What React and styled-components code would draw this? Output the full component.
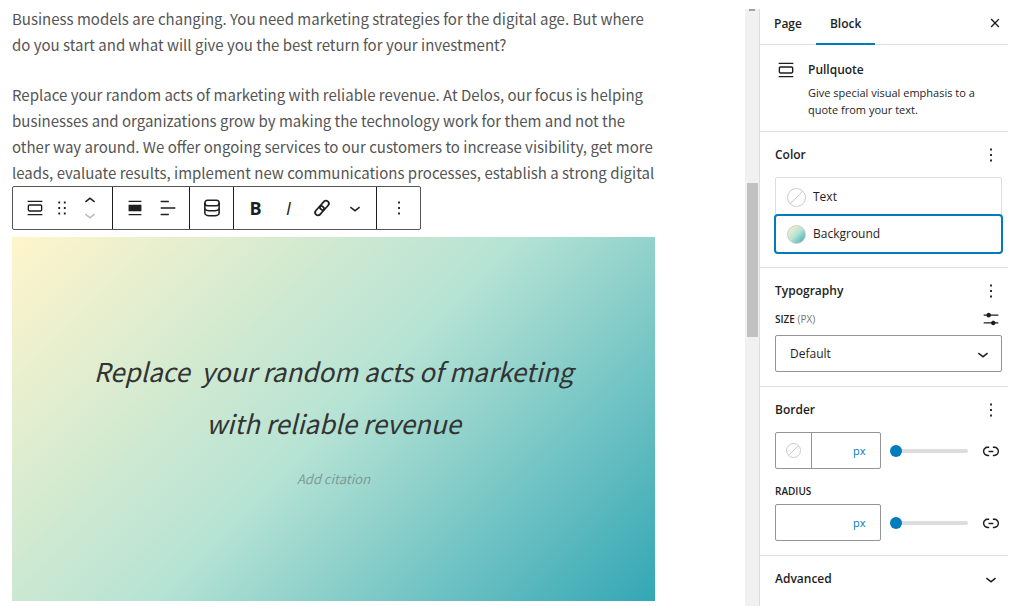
import React from 'react';
import styled, { createGlobalStyle } from 'styled-components';

const GlobalStyle = createGlobalStyle`
  * {
    box-sizing: border-box;
  }
  body {
    margin: 0;
    background: #fff;
    overflow: hidden;
  }
`;

const bodyFont = '"Noto Sans CJK SC", "Open Sans", sans-serif';
const uiFont = '"Open Sans", "Noto Sans", sans-serif';
const gradient = 'linear-gradient(135deg, rgb(255, 245, 203) 0%, rgb(182, 227, 212) 50%, rgb(51, 167, 181) 100%)';

const Page = styled.div`
  display: flex;
  height: 100vh;
  padding-right: 16px;
  overflow: hidden;
`;

const Editor = styled.main`
  flex: 1;
  min-width: 0;
  padding: 6px 90px 0 12px;
  font-family: ${bodyFont};
`;

const Paragraph = styled.p`
  margin: 0 0 24px;
  font-size: 15px;
  line-height: 26px;
  color: #555;
  white-space: nowrap;
  &:nth-of-type(2) {
    margin-bottom: 0;
  }
`;

const Toolbar = styled.div`
  display: inline-flex;
  height: 44px;
  border: 1px solid #555;
  border-radius: 2px;
  background: #fff;
  vertical-align: top;
`;

const ToolbarGroup = styled.div`
  display: flex;
  align-items: center;
  padding: 0 5px;
  & + & {
    border-left: 1px solid #1e1e1e;
  }
`;

const ToolButton = styled.button`
  display: flex;
  align-items: center;
  justify-content: center;
  width: ${(props) => props.$width || 33}px;
  height: 32px;
  padding: 0;
  border: 0;
  background: none;
  color: #1e1e1e;
`;

const Letter = styled.span`
  font: ${(props) => (props.$italic ? 'italic 400' : '700')} 18px ${uiFont};
`;

const Movers = styled.div`
  display: flex;
  flex-direction: column;
  width: 34px;
`;

const Mover = styled.button`
  display: flex;
  justify-content: center;
  align-items: center;
  height: 14px;
  padding: 0;
  border: 0;
  overflow: hidden;
  background: none;
  color: #1e1e1e;
  &:disabled {
    color: #bbb;
  }
`;

const Pullquote = styled.figure`
  margin: 7px 0 0;
  padding: 108px 64px 110px;
  text-align: center;
  background: ${gradient};
`;

const Quote = styled.blockquote`
  margin: 0 0 18px;
  font-size: 26px;
  font-style: italic;
  line-height: 52px;
  color: #333;
  white-space: pre-wrap;
`;

const Citation = styled.figcaption`
  font-size: 13px;
  font-style: italic;
  line-height: 24px;
  color: #7d9c96;
`;

const ScrollTrack = styled.div`
  width: 14px;
  margin-top: 9px;
  padding: 0 1px 0 2px;
  background: #f1f1f1;
`;

const ScrollUp = styled.div`
  width: 6px;
  height: 2px;
  margin: 0 2px 172px;
  background: #a3a3a3;
`;

const ScrollThumb = styled.div`
  height: 154px;
  background: #c1c1c1;
`;

const Sidebar = styled.aside`
  width: 249px;
  margin-top: 9px;
  border-left: 1px solid #ddd;
  font-family: ${uiFont};
  font-size: 12px;
  color: #1e1e1e;
`;

const Tabs = styled.div`
  display: flex;
  height: 36px;
  border-bottom: 1px solid #e0e0e0;
`;

const Tab = styled.button`
  height: 36px;
  padding: 0 14px 4px;
  border: 0;
  border-bottom: 2px solid ${(props) => (props.$active ? '#007cba' : 'transparent')};
  background: none;
  font: 600 12px/16px ${uiFont};
  color: #1e1e1e;
`;

const IconButton = styled.button`
  display: flex;
  align-items: center;
  justify-content: center;
  width: 22px;
  height: 22px;
  padding: 0;
  border: 0;
  background: none;
  color: #1e1e1e;
`;

const CloseButton = styled(IconButton)`
  margin: 3px 2px 0 auto;
`;

const Section = styled.section`
  padding: 12px 6px 14px 15px;
  border-bottom: 1px solid #e0e0e0;
  &:last-child {
    border-bottom: 0;
  }
`;

const BlockCard = styled.div`
  display: flex;
  gap: 11px;
  height: 87px;
  padding: 14px 15px 0;
  border-bottom: 1px solid #e0e0e0;
`;

const BlockTitle = styled.h2`
  margin: 3px 0 6px;
  font-size: 12px;
  font-weight: 600;
  line-height: 16px;
`;

const BlockText = styled.p`
  margin: 0;
  font-size: 11px;
  line-height: 17px;
`;

const Row = styled.div`
  display: flex;
  align-items: center;
  justify-content: space-between;
  margin-top: ${(props) => props.$top || 0}px;
`;

const Heading = styled.h2`
  margin: 0;
  font-size: 12px;
  font-weight: 600;
  line-height: 22px;
`;

const ColorList = styled.div`
  margin-top: 11px;
  border: 1px solid #ddd;
  border-radius: 2px;
`;

const ColorButton = styled.button`
  display: flex;
  align-items: center;
  gap: 7px;
  width: 100%;
  height: 38px;
  padding: 0 11px;
  border: 0;
  border-radius: 2px;
  background: #fff;
  font: 400 12px/16px ${uiFont};
  color: #1e1e1e;
  box-shadow: ${(props) => (props.$active ? '0 0 0 2px #007cba' : 'none')};
  & + & {
    height: 36px;
  }
`;

const Swatch = styled.span`
  width: ${(props) => props.$size || 19}px;
  height: ${(props) => props.$size || 19}px;
  border: 1px solid #ccc;
  border-radius: 50%;
  background: ${(props) => props.$fill || 'linear-gradient(135deg, #fff 47%, #ccc 48%, #ccc 52%, #fff 53%)'};
`;

const Label = styled.label`
  display: block;
  margin-top: ${(props) => props.$top || 0}px;
  font-size: 10px;
  font-weight: 600;
  line-height: 16px;
  text-transform: uppercase;
`;

const Hint = styled.span`
  font-weight: 400;
  color: #757575;
`;

const SelectWrap = styled.div`
  position: relative;
  margin-top: 5px;
  svg {
    position: absolute;
    top: 8px;
    right: 8px;
    pointer-events: none;
  }
`;

const SizeSelect = styled.select`
  appearance: none;
  display: block;
  width: 100%;
  height: 37px;
  padding: 0 14px;
  border: 1px solid #949494;
  border-radius: 2px;
  background: #fff;
  font: 400 12px/16px ${uiFont};
  color: #1e1e1e;
`;

const UnitBox = styled.div`
  display: flex;
  width: 106px;
  height: 37px;
  border: 1px solid #949494;
  border-radius: 2px;
`;

const SwatchButton = styled.button`
  display: flex;
  align-items: center;
  justify-content: center;
  width: 36px;
  padding: 0;
  border: 0;
  border-right: 1px solid #949494;
  background: none;
`;

const NumberInput = styled.input`
  flex: 1;
  min-width: 0;
  padding: 0 6px;
  border: 0;
  background: none;
  font: 400 12px/16px ${uiFont};
`;

const UnitSelect = styled.select`
  appearance: none;
  width: 27px;
  padding: 0;
  border: 0;
  background: none;
  font: 400 11px/16px ${uiFont};
  color: #007cba;
`;

const Slider = styled.input`
  appearance: none;
  width: 78px;
  height: 12px;
  margin: 0 3px 0 0;
  background: none;
  &::-webkit-slider-runnable-track {
    height: 4px;
    border-radius: 2px;
    background: #ddd;
  }
  &::-webkit-slider-thumb {
    appearance: none;
    width: 12px;
    height: 12px;
    margin-top: -4px;
    border-radius: 50%;
    background: #007cba;
  }
`;

const Collapse = styled.button`
  display: flex;
  align-items: center;
  justify-content: space-between;
  width: 100%;
  padding: 0;
  border: 0;
  background: none;
  font: 600 12px/22px ${uiFont};
  color: #1e1e1e;
`;

const icons = {
  pullquote: 'M18 8H6c-1.1 0-2 .9-2 2v4c0 1.1.9 2 2 2h12c1.1 0 2-.9 2-2v-4c0-1.1-.9-2-2-2zm.5 6c0 .3-.2.5-.5.5H6c-.3 0-.5-.2-.5-.5v-4c0-.3.2-.5.5-.5h12c.3 0 .5.2.5.5v4zM4 4v1.5h16V4H4zm0 16h16v-1.5H4V20z',
  drag: 'M8 7h2V5H8v2zm0 6h2v-2H8v2zm0 6h2v-2H8v2zm6-14v2h2V5h-2zm0 8h2v-2h-2v2zm0 6h2v-2h-2v2z',
  up: 'M6.5 12.4L12 8l5.5 4.4-.9 1.2L12 10l-4.5 3.6-1-1.2z',
  down: 'M17.5 11.6L12 16l-5.5-4.4.9-1.2L12 14l4.5-3.6 1 1.2z',
  align: 'M5 4h14v1.5H5V4zm0 4.5h14v7H5v-7zm0 10h14V20H5v-1.5z',
  alignText: 'M4 19.8h8.9v-1.5H4v1.5zm8.9-15.6H4v1.5h8.9V4.2zm-8.9 7v1.5h16v-1.5H4z',
  more: 'M13 19h-2v-2h2v2zm0-6h-2v-2h2v2zm0-6h-2V5h2v2z',
  settings: 'M14.5 13.8c-1.1 0-2.1.7-2.4 1.8H4V17h8.1c.3 1 1.3 1.8 2.4 1.8s2.1-.7 2.4-1.8H20v-1.5h-3.1c-.3-1-1.3-1.7-2.4-1.7zM11.9 7c-.3-1-1.3-1.8-2.4-1.8S7.4 6 7.1 7H4v1.5h3.1c.3 1 1.3 1.8 2.4 1.8s2.1-.7 2.4-1.8H20V7h-8.1z',
  close: 'M12 13.06l3.712 3.713 1.061-1.06L13.061 12l3.712-3.712-1.06-1.06L12 10.938 8.288 7.227l-1.061 1.06L10.939 12l-3.712 3.712 1.06 1.061L12 13.061z',
  linked: 'M15.6 7.2H14v1.5h1.6c2 0 3.7 1.7 3.7 3.7s-1.7 3.7-3.7 3.7H14v1.5h1.6c2.8 0 5.2-2.3 5.2-5.2 0-2.9-2.3-5.2-5.2-5.2zM4.7 12.4c0-2 1.7-3.7 3.7-3.7H10V7.2H8.4c-2.9 0-5.2 2.3-5.2 5.2 0 2.9 2.3 5.2 5.2 5.2H10v-1.5H8.4c-2 0-3.7-1.7-3.7-3.7zm4.6.9h5.3v-1.5H9.3v1.5z',
};

const Svg = styled.svg`
  flex-shrink: 0;
`;

const Icon = ({ name }) => (
  <Svg width="22" height="22" viewBox="0 0 24 24" fill="currentColor">
    <path d={icons[name]} />
  </Svg>
);

const DatabaseIcon = () => (
  <Svg width="22" height="22" viewBox="0 0 24 24" fill="none" stroke="currentColor" strokeWidth="1.7">
    <rect x="4.2" y="3.6" width="15.6" height="6" rx="3" />
    <path d="M4.2 6.6v10.8c0 1.7 2.2 3 4.6 3h6.4c2.4 0 4.6-1.3 4.6-3V6.6M4.2 12c0 1.7 2.2 3 4.6 3h6.4c2.4 0 4.6-1.3 4.6-3" />
  </Svg>
);

const ChainIcon = () => (
  <Svg width="22" height="22" viewBox="0 0 24 24" fill="none" stroke="currentColor" strokeWidth="1.9">
    <g transform="rotate(-48 12 12)">
      <rect x="2.4" y="8.9" width="11.4" height="6.2" rx="3.1" />
      <rect x="10.2" y="8.9" width="11.4" height="6.2" rx="3.1" />
    </g>
  </Svg>
);

const PanelHead = ({ title }) => (
  <Row>
    <Heading>{title}</Heading>
    <IconButton aria-label={`${title} options`}><Icon name="more" /></IconButton>
  </Row>
);

const EditorToolbar = () => (
  <Toolbar role="toolbar">
    <ToolbarGroup>
      <ToolButton aria-label="Pullquote"><Icon name="pullquote" /></ToolButton>
      <ToolButton $width={22} aria-label="Drag"><Icon name="drag" /></ToolButton>
      <Movers>
        <Mover aria-label="Move up"><Icon name="up" /></Mover>
        <Mover aria-label="Move down" disabled><Icon name="down" /></Mover>
      </Movers>
    </ToolbarGroup>
    <ToolbarGroup>
      <ToolButton aria-label="Align"><Icon name="align" /></ToolButton>
      <ToolButton aria-label="Align text"><Icon name="alignText" /></ToolButton>
    </ToolbarGroup>
    <ToolbarGroup>
      <ToolButton aria-label="Data"><DatabaseIcon /></ToolButton>
    </ToolbarGroup>
    <ToolbarGroup>
      <ToolButton aria-label="Bold"><Letter>B</Letter></ToolButton>
      <ToolButton aria-label="Italic"><Letter $italic>I</Letter></ToolButton>
      <ToolButton aria-label="Link"><ChainIcon /></ToolButton>
      <ToolButton aria-label="More"><Icon name="down" /></ToolButton>
    </ToolbarGroup>
    <ToolbarGroup>
      <ToolButton aria-label="Options"><Icon name="more" /></ToolButton>
    </ToolbarGroup>
  </Toolbar>
);

class App extends React.Component {
  constructor(props) {
    super(props);
    this.state = {
      width: 0,
      radius: 0,
    };
    this.handleSlide = this.handleSlide.bind(this);
  }

  handleSlide(e) {
    this.setState({ [e.target.name]: Number(e.target.value) });
  }

  render() {
    const { width, radius } = this.state;
    return (
      <Page>
        <GlobalStyle />
        <Editor>
          <Paragraph>
            Business models are changing. You need marketing strategies for the digital age. But where<br />
            do you start and what will give you the best return for your investment?
          </Paragraph>
          <Paragraph>
            Replace your random acts of marketing with reliable revenue. At Delos, our focus is helping<br />
            businesses and organizations grow by making the technology work for them and not the<br />
            other way around. We offer ongoing services to our customers to increase visibility, get more<br />
            leads, evaluate results, implement new communications processes, establish a strong digital
          </Paragraph>
          <EditorToolbar />
          <Pullquote>
            <Quote>{'Replace  your random acts of marketing with reliable revenue'}</Quote>
            <Citation>Add citation</Citation>
          </Pullquote>
        </Editor>
        <ScrollTrack>
          <ScrollUp />
          <ScrollThumb />
        </ScrollTrack>
        <Sidebar>
          <Tabs>
            <Tab>Page</Tab>
            <Tab $active>Block</Tab>
            <CloseButton aria-label="Close settings"><Icon name="close" /></CloseButton>
          </Tabs>
          <BlockCard>
            <Icon name="pullquote" />
            <div>
              <BlockTitle>Pullquote</BlockTitle>
              <BlockText>Give special visual emphasis to a quote from your text.</BlockText>
            </div>
          </BlockCard>
          <Section>
            <PanelHead title="Color" />
            <ColorList>
              <ColorButton><Swatch />Text</ColorButton>
              <ColorButton $active><Swatch $fill={gradient} />Background</ColorButton>
            </ColorList>
          </Section>
          <Section>
            <PanelHead title="Typography" />
            <Row $top={6}>
              <Label htmlFor="size">Size <Hint>(px)</Hint></Label>
              <IconButton aria-label="Set custom size"><Icon name="settings" /></IconButton>
            </Row>
            <SelectWrap>
              <SizeSelect id="size"><option>Default</option></SizeSelect>
              <Icon name="down" />
            </SelectWrap>
          </Section>
          <Section>
            <PanelHead title="Border" />
            <Row $top={11}>
              <UnitBox>
                <SwatchButton aria-label="Border color"><Swatch $size={15} /></SwatchButton>
                <NumberInput aria-label="Border width" />
                <UnitSelect aria-label="Width unit"><option>px</option></UnitSelect>
              </UnitBox>
              <Slider type="range" name="width" aria-label="Width" value={width} onChange={this.handleSlide} />
              <IconButton aria-label="Unlink sides"><Icon name="linked" /></IconButton>
            </Row>
            <Label $top={14} htmlFor="radius">Radius</Label>
            <Row $top={5}>
              <UnitBox>
                <NumberInput id="radius" />
                <UnitSelect aria-label="Radius unit"><option>px</option></UnitSelect>
              </UnitBox>
              <Slider type="range" name="radius" aria-label="Radius" value={radius} onChange={this.handleSlide} />
              <IconButton aria-label="Unlink radii"><Icon name="linked" /></IconButton>
            </Row>
          </Section>
          <Section>
            <Collapse>Advanced<Icon name="down" /></Collapse>
          </Section>
        </Sidebar>
      </Page>
    );
  }
}

export default App;
